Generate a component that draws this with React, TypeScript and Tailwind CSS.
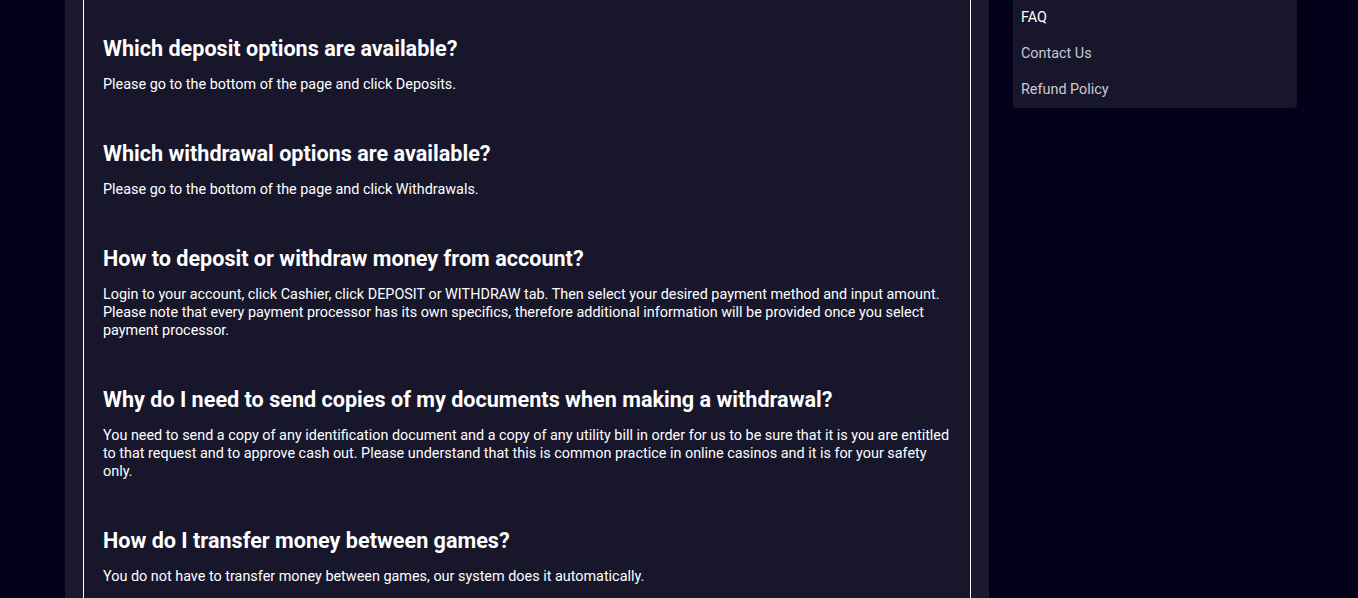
import React from "react";

const faqs = [
  {
    q: "Which deposit options are available?",
    a: "Please go to the bottom of the page and click Deposits.",
  },
  {
    q: "Which withdrawal options are available?",
    a: "Please go to the bottom of the page and click Withdrawals.",
  },
  {
    q: "How to deposit or withdraw money from account?",
    a: "Login to your account, click Cashier, click DEPOSIT or WITHDRAW tab. Then select your desired payment method and input amount. Please note that every payment processor has its own specifics, therefore additional information will be provided once you select payment processor.",
  },
  {
    q: "Why do I need to send copies of my documents when making a withdrawal?",
    a: "You need to send a copy of any identification document and a copy of any utility bill in order for us to be sure that it is you are entitled to that request and to approve cash out. Please understand that this is common practice in online casinos and it is for your safety only.",
  },
  {
    q: "How do I transfer money between games?",
    a: "You do not have to transfer money between games, our system does it automatically.",
  },
];

const links = [
  { label: "FAQ", active: true },
  { label: "Contact Us", active: false },
  { label: "Refund Policy", active: false },
];

export default function App() {
  return (
    <div
      className="h-[598px] w-full overflow-hidden bg-[#03001a] flex items-start gap-6 pl-[65px]"
      style={{ fontFamily: "Roboto, 'Liberation Sans', sans-serif" }}
    >
      {/* Main content panel */}
      <div className="w-[924px] h-full bg-[#1a192e] px-[18px]">
        <div className="h-full bg-[#17162b] border-x border-white px-[19px] pt-[35px]">
          {faqs.map((item) => (
            <div key={item.q} className="mb-[46px]">
              <h3 className="text-[21.6px] leading-7 font-bold text-white mb-[13px]">{item.q}</h3>
              <p className="text-[14.4px] leading-[18px] text-white">{item.a}</p>
            </div>
          ))}
        </div>
      </div>

      {/* Sidebar */}
      <div className="w-[284px] bg-[#17162b] rounded-b">
        {links.map((l) => (
          <div
            key={l.label}
            className={`h-9 flex items-center pl-2 text-[14.4px] ${l.active ? "text-white" : "text-[#c9c9d6]"}`}
          >
            {l.label}
          </div>
        ))}
      </div>
    </div>
  );
}
